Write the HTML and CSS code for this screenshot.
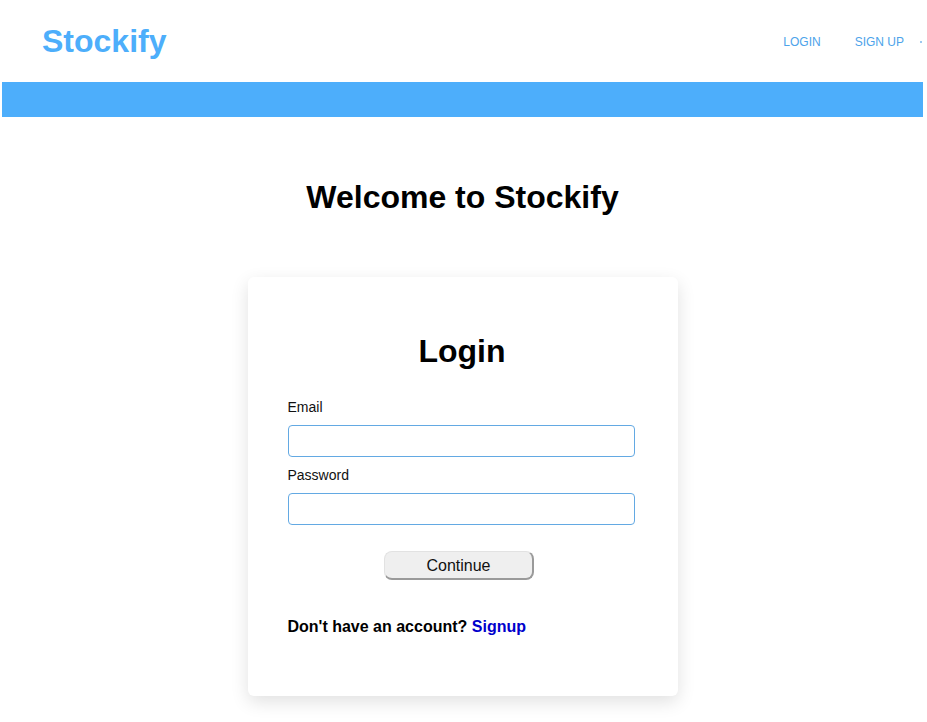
FILE: index.html
```html
<!DOCTYPE html>
<html>
<head>
<meta charset="utf-8">
<link rel="stylesheet" href="styles.css">
</head>
<body>
<header class="topbar">
  <div class="brand">Stockify</div>
  <nav class="nav">
    <a class="nav-link" href="#">LOGIN</a>
    <a class="nav-link" href="#">SIGN UP</a>
    <span class="nav-dot"></span>
  </nav>
</header>
<div class="band"></div>
<main class="main">
  <h1 class="welcome">Welcome to Stockify</h1>
  <section class="card">
    <h2 class="card-title">Login</h2>
    <form class="form">
      <label class="label">Email</label>
      <input class="input" type="text">
      <label class="label">Password</label>
      <input class="input" type="password">
      <div class="btn-row"><button class="btn" type="button">Continue</button></div>
      <p class="alt">Don't have an account? <a class="alt-link" href="#">Signup</a></p>
    </form>
  </section>
</main>
</body>
</html>
```
FILE: styles.css
```css
* { box-sizing: border-box; }
html, body { margin: 0; padding: 0; background: #fff; }
body { font-family: "Liberation Sans", Arial, sans-serif; color: #000; }
.topbar {
  height: 82px;
  display: flex;
  align-items: center;
  justify-content: space-between;
  padding: 0 0 0 42px;
}
.brand {
  font-size: 32px;
  font-weight: bold;
  color: #4daefb;
}
.nav {
  display: flex;
  align-items: center;
  margin-top: 1px;
}
.nav-link {
  font-size: 12px;
  color: #4da3ea;
  text-decoration: none;
  margin-right: 34px;
}
.nav-link:last-of-type { margin-right: 16px; }
.nav-dot {
  width: 2px; height: 2px; background: #9cc8ef; margin-right: 5px;
}
.band {
  height: 35px;
  margin: 0 4px 0 2px;
  background: #4daefb;
}
.main {
  display: flex;
  flex-direction: column;
  align-items: center;
  padding: 62px 2px 24px 0;
}
.welcome {
  margin: 0;
  font-size: 32px;
  font-weight: bold;
  line-height: 37px;
}
.card {
  margin-top: 61px;
  width: 430px;
  height: 419px;
  background: #fff;
  border-radius: 6px;
  box-shadow: 0 6px 18px rgba(0,0,0,0.12);
  padding: 56px 43px 0 40px;
}
.card-title {
  margin: 0;
  text-align: center;
  font-size: 32px;
  font-weight: bold;
  line-height: 37px;
  padding-left: 2px;
}
.form { display: flex; flex-direction: column; margin-top: 29px; }
.label { font-size: 14px; line-height: 16px; color: #111; margin-bottom: 10px; }
.input {
  width: 347px;
  height: 32px;
  border: 1px solid #63a9e3;
  border-radius: 4px;
  margin-bottom: 10px;
  font-size: 14px;
  outline: none;
}
.btn-row { display: flex; justify-content: center; margin-top: 16px; padding-right: 4px; }
.btn {
  width: 150px;
  height: 29px;
  background: #efefef;
  border: 1px solid #e2e2e2;
  border-right: 2px solid #9a9a9a;
  border-bottom: 2px solid #9a9a9a;
  border-radius: 8px;
  font-family: "Liberation Sans", Arial, sans-serif;
  font-size: 16px;
  color: #111;
  padding: 1px 0 0;
}
.alt { margin: 38px 0 0; font-size: 16px; font-weight: bold; }
.alt-link { color: #0000cc; text-decoration: none; }
```
